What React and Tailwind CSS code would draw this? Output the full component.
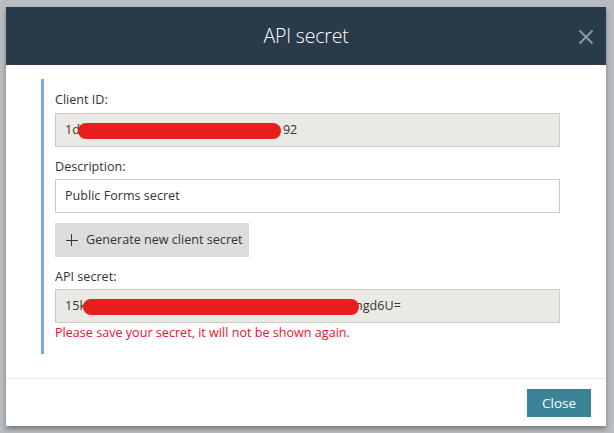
import React from "react";

const font = { fontFamily: '"Segoe UI", "Open Sans", "Noto Sans", sans-serif' };

export default function App() {
  return (
    <div className="min-h-[433px] w-[614px] bg-[#b9bdc0] pt-[7px] pl-[6px]" style={font}>
      <div className="w-[600px] bg-white shadow-[0_3px_5px_rgba(0,0,0,0.35)]">
        <div className="relative flex h-[58px] items-center justify-center bg-[#293a4a]">
          <div className="text-[19.5px] font-light text-white tracking-[-0.2px]">API secret</div>
          <svg className="absolute right-[12px] top-[22px]" width="16" height="16" viewBox="0 0 16 16">
            <path d="M1.5 1.5L14.5 14.5M14.5 1.5L1.5 14.5" stroke="#8c97a1" strokeWidth="2" />
          </svg>
        </div>
        <div className="pt-[14px] pb-[24px] pl-[35px] pr-[46px]">
          <div className="border-l-[3px] border-[#72ace3] pl-[11px] pt-[11px] pb-[11px] text-[12.6px] text-[#333]">
            <div className="leading-[20px] mb-[3px]">Client ID:</div>
            <div className="flex h-[34px] items-center border border-[#cacaca] bg-[#eae9e3] pl-[9px]">
              <span>1d</span>
              <span className="relative z-10 inline-block h-[16px] w-[203px] shrink-0 translate-y-[1px] rounded-full bg-[#e81e1e] -ml-[2px]" />
              <span className="ml-[2px]">92</span>
            </div>
            <div className="leading-[20px] mt-[10px] mb-[2px]">Description:</div>
            <div className="flex h-[34px] items-center border border-[#cacaca] bg-white pl-[9px]">
              Public Forms secret
            </div>
            <button className="mt-[10px] flex h-[34px] w-[194px] items-center bg-[#dddddd] pl-[11px] text-[#333]">
              <svg width="12" height="12" viewBox="0 0 12 12" className="mr-[8px]">
                <path d="M0 6.5H12" stroke="#333" strokeWidth="1" />
                <path d="M5.5 0V12" stroke="#4a2a55" strokeWidth="1" />
              </svg>
              <span className="whitespace-nowrap">Generate new client secret</span>
            </button>
            <div className="leading-[20px] mt-[10px] mb-[2px]">API secret:</div>
            <div className="flex h-[34px] items-center border border-[#cacaca] bg-[#eae9e3] pl-[9px]">
              <span className="whitespace-nowrap">15k</span>
              <span className="relative z-10 inline-block h-[16px] w-[276px] shrink-0 translate-y-[1px] rounded-full bg-[#e81e1e] -ml-[3px]" />
              <span className="-ml-[4px]">ngd6U=</span>
            </div>
            <div className="leading-[20px] text-[#e8112d]">Please save your secret, it will not be shown again.</div>
          </div>
        </div>
        <div className="flex justify-end border-t border-[#e9e9e9] pt-[10px] pb-[9px] pr-[15px]">
          <button className="h-[28px] w-[64px] bg-[#3b8498] text-[13.5px] text-white">Close</button>
        </div>
      </div>
    </div>
  );
}
